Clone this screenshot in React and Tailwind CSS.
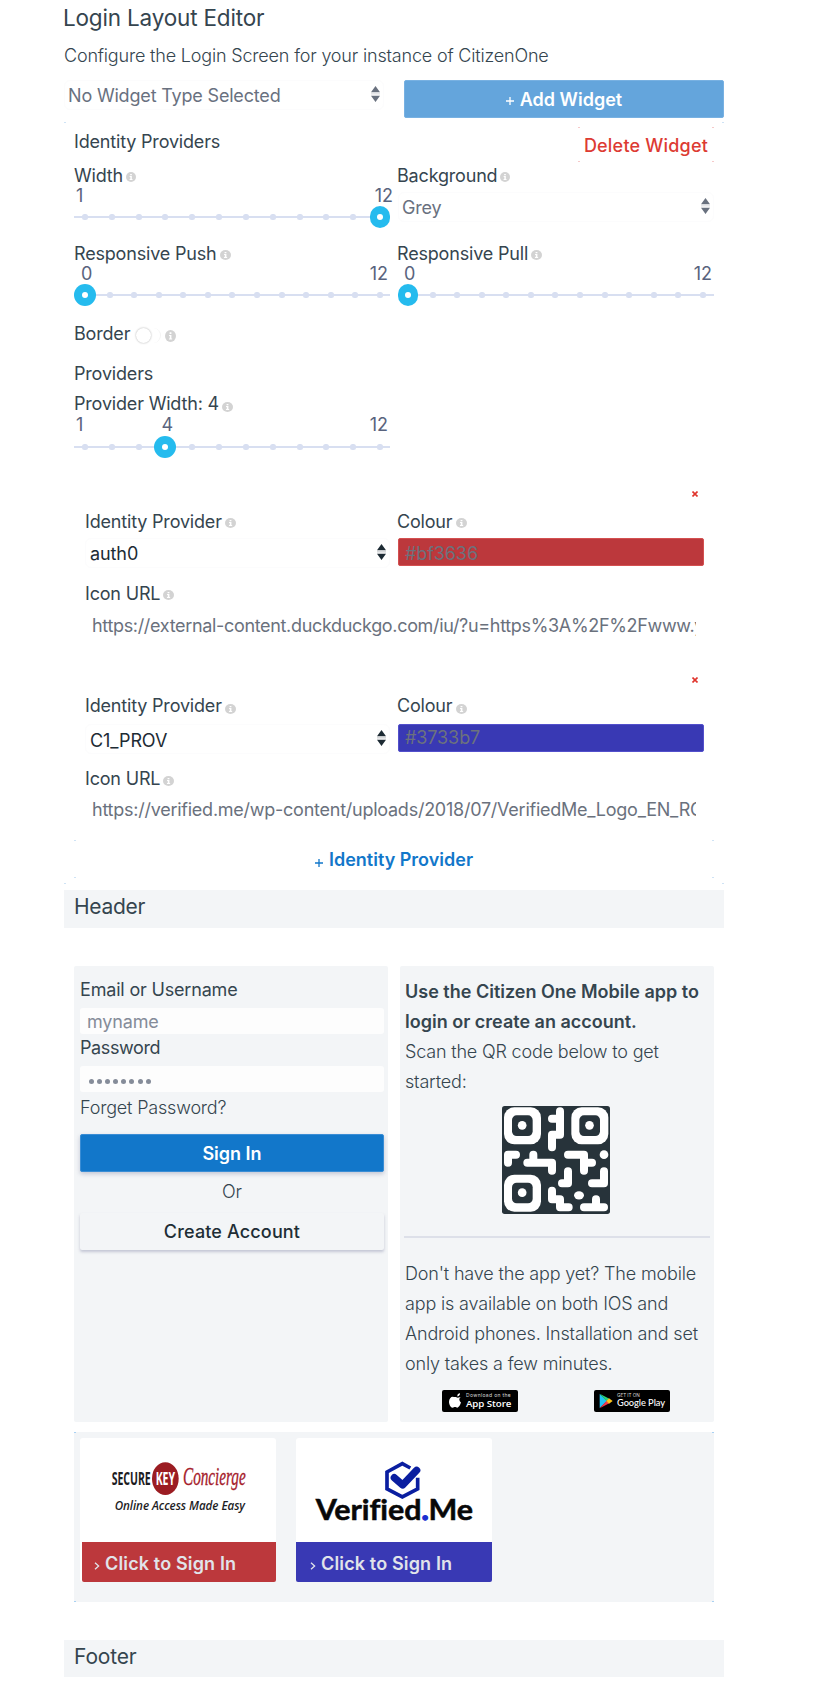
import React from "react";

function Corners({ color }) {
  return (
    <svg className={"pointer-events-none absolute inset-0 h-full w-full " + color} fill="currentColor">
      <rect x="0" y="0" width="2" height="1" />
      <rect x="0" y="100%" width="2" height="1" transform="translate(0 -1)" />
      <rect x="100%" y="0" width="2" height="1" transform="translate(-2 0)" />
      <rect x="100%" y="100%" width="2" height="1" transform="translate(-2 -1)" />
    </svg>
  );
}

function Info({ className = "" }) {
  return (
    <svg viewBox="0 0 12 12" preserveAspectRatio="none" className={"shrink-0 " + className}>
      <circle cx="6" cy="6" r="6" fill="#d3d3d3" />
      <path d="M5 2.3h2v1.6H5zM4.4 4.9H7v3.5h.8v1.2H4.3V8.4h.9V6h-.8z" fill="#fff" />
    </svg>
  );
}

function Label({ children, className = "", info = "mt-[5px] h-[11px] w-[11px]" }) {
  return (
    <div className={"flex h-5 whitespace-nowrap text-[18px] leading-5 text-[#35454f] " + className}>
      <span>{children}</span>
      <Info className={info} />
    </div>
  );
}

function Arrows({ className = "" }) {
  return (
    <svg viewBox="0 0 9 16" className={"h-4 w-[9px] shrink-0 " + className} fill="currentColor">
      <path d="M4.5 0L9 6.3H0zM4.5 16L9 9.7H0z" />
      <path d="M0 7.5h9v.8H0z" opacity=".35" />
    </svg>
  );
}

function Select({ value, className, textClass = "", arrowClass = "mt-[6px]" }) {
  return (
    <div className={"flex h-[30px] justify-between rounded-[6px] border border-[#fcfcfd] pl-[3px] pr-[3px] text-[18px] " + className}>
      <span className={textClass}>{value}</span>
      <Arrows className={arrowClass} />
    </div>
  );
}

function Slider({ steps, value, marks, wide = "w-[22px]", track = "pl-[8px] pr-[7px]" }) {
  return (
    <div className="w-[316px]">
      <div className="flex h-5 justify-between px-[2px] text-[18px] leading-5 tracking-normal text-[#59637d]">{marks}</div>
      <div className={"relative flex h-[22px] items-center justify-between " + track}>
        <div className="absolute inset-x-0 top-[10px] h-[2px] bg-[#d8dff1]" />
        {Array.from({ length: steps }, (_, i) => (
          <div key={i} className="relative flex h-[6px] w-[6px] items-center justify-center rounded-[2.5px] bg-[#d8dff1]">
            {i === value && (
              <div className={"flex h-[22px] shrink-0 items-center justify-center rounded-full bg-[#25bbee] " + wide}>
                <div className="h-[6px] w-[6px] rounded-[3px] bg-white" />
              </div>
            )}
          </div>
        ))}
      </div>
    </div>
  );
}

function Provider({ name, colour, colourBox, url, urlClass, second }) {
  const info = second ? "mt-[8px] h-[10px] w-[11px]" : "mt-[6px] h-[10px] w-[11px]";
  return (
    <div className="pl-[11px]">
      <div className="flex h-[6px] justify-end pr-[16px]">
        <svg viewBox="0 0 6 6" className="h-[6px] w-[6px]" stroke="#e0342c" strokeWidth="1.6"><path d="M.5 .5l5 5M5.500 .5l-5 5" /></svg>
      </div>
      <div className={"flex " + (second ? "mt-[13px]" : "mt-[15px]")}>
        <Label className="w-[312px]" info={info + " ml-[3px]"}>Identity Provider</Label>
        <Label info={info + " ml-[4px]"}>Colour</Label>
      </div>
      <div className={"flex " + (second ? "mt-[8px]" : "mt-[6px]")}>
        <Select
          value={name}
          className="w-[305px] tracking-[-0.1px] text-[#1d2b34]"
          textClass={second ? "ml-px mt-[6px] leading-5" : "ml-px mt-[5px] leading-5"}
          arrowClass="mt-[5px]"
        />
        <div className={"ml-[8px] h-[28px] w-[306px] rounded-[2px] border pl-[6px] text-[18px] tracking-[-0.1px] text-[#6c727d] " + colourBox}>
          {colour}
        </div>
      </div>
      <Label className={second ? "mt-[15px]" : "mt-[16px]"} info={(second ? "mt-[7px]" : "mt-[6px]") + " ml-[3px] h-[10px] w-[11px]"}>Icon URL</Label>
      <div className={"h-[28px] w-[618px] pl-[7px] pr-[7px] " + (second ? "mt-[7px]" : "mt-[8px]")}>
        <div className={"overflow-hidden whitespace-nowrap text-[18px] leading-[28px] text-[#6a717d] " + urlClass}>{url}</div>
      </div>
    </div>
  );
}

function QrCode() {
  return (
    <svg viewBox="0 0 324 324" className="h-[108px] w-[108px]">
      <rect width="324" height="324" rx="8" fill="#27333a" />
      {[[6, 4], [208, 4], [6, 206]].map(([x, y]) => (
        <g key={x + "-" + y} transform={`translate(${x} ${y})`}>
          <rect width="111" height="111" rx="31" fill="#fff" />
          <rect x="24" y="24" width="62" height="62" rx="14" fill="#27333a" />
          <circle cx="54.500" cy="54" r="13" fill="#fff" />
        </g>
      ))}
      <g fill="none" stroke="#fff" strokeWidth="24" strokeLinecap="round" strokeLinejoin="round">
        <path d="M174 16V86H150V124M150 38H174" />
        <path d="M42 146H18V170M94 146V170M76 170H150V194" />
        <path d="M198 146H246V194M246 170H270" />
        <path d="M198 196V232H180M306 196V232H270" />
        <path d="M150 254V280H174V304H200M246 304H306M282 280V304" />
      </g>
      <circle cx="306" cy="146" r="13" fill="#fff" />
      <ellipse cx="231" cy="268" rx="15" ry="12.500" fill="#fff" />
    </svg>
  );
}

function AppStore() {
  return (
    <svg viewBox="0 0 228 66" className="h-[22px] w-[76px]">
      <rect width="228" height="66" rx="6" fill="#000" />
      <path d="M46 19c-1-5 4-9 8-9 1 5-4 10-8 9zM39 21c4 0 5 2 8 2s5-2 9-1c-4 3-5 6-3 10 1 3 3 4 4 5-2 8-7 16-11 16-3 0-4-2-7-2s-4 2-7 2c-6 0-11-10-11-18 0-9 6-15 11-15 3 0 5 1 7 1z" fill="#fff" />
      <text x="72" y="22" fontSize="15" fill="#ddd" fontFamily="Inter, sans-serif" textLength="134">Download on the</text>
      <text x="72" y="50" fontSize="26" fontWeight="600" fill="#fff" fontFamily="Open Sans, sans-serif" textLength="136" lengthAdjust="spacingAndGlyphs">App Store</text>
    </svg>
  );
}

function GooglePlay() {
  return (
    <svg viewBox="0 0 228 66" className="h-[22px] w-[76px]">
      <rect width="228" height="66" rx="6" fill="#000" />
      <path d="M17 12v42l22-21z" fill="#20c4f4" />
      <path d="M17 11l29 15-8 8z" fill="#27d07a" />
      <path d="M17 55l29-15-8-8z" fill="#f0394b" />
      <path d="M45 25l11 8-11 8-8-8z" fill="#fcc419" />
      <text x="69" y="21" fontSize="14" fill="#ddd" fontFamily="Inter, sans-serif" textLength="68" lengthAdjust="spacingAndGlyphs">GET IT ON</text>
      <text x="69" y="48" fontSize="26" fontWeight="500" fill="#fff" fontFamily="Lato, sans-serif" textLength="144" lengthAdjust="spacingAndGlyphs">Google Play</text>
    </svg>
  );
}

function SecureKeyLogo() {
  return (
    <svg viewBox="0 0 588 312" className="h-[104px] w-[196px]">
      <text x="95" y="141" fontSize="55" fontWeight="700" fill="#1d1d1f" fontFamily="Open Sans, sans-serif" textLength="117" lengthAdjust="spacingAndGlyphs">SECURE</text>
      <ellipse cx="256" cy="122" rx="40" ry="49" fill="#9b1c22" />
      <text x="227" y="141" fontSize="55" fontWeight="700" fill="#fff" fontFamily="Open Sans, sans-serif" textLength="58" lengthAdjust="spacingAndGlyphs">KEY</text>
      <text x="309" y="142" fontSize="73" fontStyle="italic" fill="#a5202b" stroke="#a5202b" strokeWidth="1" fontFamily="Liberation Serif, serif" textLength="188" lengthAdjust="spacingAndGlyphs">Concierge</text>
      <text x="104" y="216" fontSize="37" fontStyle="italic" fontWeight="600" fill="#1d1d1f" fontFamily="Open Sans, sans-serif" textLength="391" lengthAdjust="spacingAndGlyphs">Online Access Made Easy</text>
    </svg>
  );
}

function VerifiedLogo() {
  return (
    <svg viewBox="0 0 588 312" className="h-[104px] w-[196px]">
      <path d="M343 90L319 77 273 102V153L319 177 365 153V119" fill="none" stroke="#0a1ea0" strokeWidth="11" />
      <path d="M295 119L320 141 362 97" fill="none" stroke="#0a1ea0" strokeWidth="22" strokeLinecap="round" strokeLinejoin="round" />
      <text x="59" y="246" fontSize="86" fontWeight="700" fill="#080808" stroke="#080808" strokeWidth="1.5" fontFamily="Lato, sans-serif" textLength="472" lengthAdjust="spacingAndGlyphs" className="[font-variant-ligatures:none]">
        Verified<tspan fill="#1a2fd0" stroke="#1a2fd0" strokeWidth="4">.</tspan>Me
      </text>
    </svg>
  );
}

function SignInCard({ logo, bandClass, arrowClass }) {
  return (
    <div className="h-[144px] w-[196px] rounded-[3px] bg-white">
      <div className="h-[104px]">{logo}</div>
      <div className={"flex h-[40px] rounded-b-[2px] text-[18px] font-semibold leading-[44px] text-[#e1e4ea] " + bandClass}>
        <svg viewBox="0 0 6 8" className={"mt-[20px] h-[8px] w-[6px] " + arrowClass} fill="none" stroke="currentColor" strokeWidth="1.3"><path d="M1 .8L4.600 4 1 7.200" /></svg>
        <span className="tracking-[0.15px]">Click to Sign In</span>
      </div>
    </div>
  );
}

function Plus({ className }) {
  return (
    <svg viewBox="0 0 8 8" className={"h-[8px] w-[8px] " + className} stroke="currentColor" strokeWidth="1.3"><path d="M4 0v8M0 4h8" /></svg>
  );
}

export default function App() {
  return (
    <div className="min-h-[1684px] w-[830px] bg-white pl-[64px] font-['Inter',sans-serif] text-[18px] tracking-[-0.18px] text-[#35454f]">
      <div className="w-[660px]">
        <h1 className="-ml-px pt-[4px] text-[22.500px] leading-[28px]">Login Layout Editor</h1>
        <p className="mt-[14px] h-5 whitespace-nowrap font-light leading-5">Configure the Login Screen for your instance of CitizenOne</p>

        <div className="mt-[14px] flex h-[38px] justify-between">
          <Select value="No Widget Type Selected" className="w-[320px] text-[#69717f]" textClass="mt-[5px] leading-5 whitespace-nowrap" arrowClass="mt-[5px]" />
          <button className="flex h-[38px] w-[320px] items-center justify-center rounded-[2px] border border-[#78b1e2] bg-[#64a5dc] font-semibold tracking-normal text-white">
            <Plus className="mr-[6px] mt-[4px]" />Add Widget
          </button>
        </div>

        <section className="relative mt-[4px] h-[762px] px-[10px]">
          <Corners color="text-[#cfe3f5]" />
          <div className="flex h-[44px] justify-between pt-[5px]">
            <span className="mt-[5px] leading-5">Identity Providers</span>
            <button className="relative h-[35px] w-[136px] font-medium leading-[38px] tracking-[0.2px] text-[#dd3b33]"><Corners color="text-[#f6c9c9]" />Delete Widget</button>
          </div>

          <div className="flex gap-[8px]">
            <div className="w-[316px]">
              <Label info="mt-[6px] ml-[3px] h-[10px] w-[10px]">Width</Label>
              <Slider steps={12} value={11} wide="w-[20px]" marks={<><span>1</span><span className="-mr-[5px]">12</span></>} />
            </div>
            <div className="w-[316px]">
              <Label className="-ml-px" info="mt-[6px] ml-[3px] h-[10px] w-[10px]">Background</Label>
              <Select value="Grey" className="mt-[6px] w-[316px] text-[#69717f]" textClass="mt-[5px] leading-5" arrowClass="mt-[5px]" />
            </div>
          </div>

          <div className="mt-[16px] flex gap-[8px]">
            <div className="w-[316px]">
              <Label info="mt-[6px] ml-[3px] h-[10px] w-[11px]">Responsive Push</Label>
              <Slider steps={13} value={0} marks={<><span className="ml-[5px]">0</span><span>12</span></>} />
            </div>
            <div className="w-[316px]">
              <Label className="-ml-px" info="mt-[6px] ml-[3px] h-[10px] w-[11px]">Responsive Pull</Label>
              <Slider steps={13} value={0} wide="w-[20px]" track="pl-[7px] pr-[8px]" marks={<><span className="ml-[4px]">0</span><span>12</span></>} />
            </div>
          </div>

          <div className="mt-[18px] flex h-5 leading-5">
            <span>Border</span>
            <div className="ml-[6px] mt-[4px] h-[15px] w-[25px] rounded-full border-r border-[#f4f4f4]">
              <div className="h-[15px] w-[15px] rounded-full bg-white shadow-[0_0_2px_rgba(0,0,0,0.35)]" />
            </div>
            <Info className="ml-[4px] mt-[6px] h-[12px] w-[11px]" />
          </div>
          <div className="mt-[20px] h-5 leading-5">Providers</div>
          <Label className="mt-[10px] mb-px" info="mt-[8px] ml-[3px] h-[10px] w-[11px]">Provider Width: 4</Label>
          <Slider steps={12} value={3} track="mt-px pl-[8px] pr-[7px]" marks={<><span className="w-5">1</span><span className="-ml-[131px]">4</span><span>12</span></>} />

          <div className="mt-[33px]">
            <Provider name="auth0" colour="#bf3636" colourBox="border-[#d45050] bg-[#bc383c] leading-[29px]" url="https://external-content.duckduckgo.com/iu/?u=https%3A%2F%2Fwww.youtube.com" urlClass="tracking-[-0.33px]" />
          </div>
          <div className="mt-[37px]">
            <Provider second name="C1_PROV" colour="#3733b7" colourBox="border-[#5350cc] bg-[#3939b4] leading-[26px]" url="https://verified.me/wp-content/uploads/2018/07/VerifiedMe_Logo_EN_RGB.png" urlClass="tracking-[-0.25px]" />
          </div>
          <button className="relative mt-[16px] flex h-[38px] w-full items-center justify-center font-semibold tracking-normal text-[#1277ca]">
            <Corners color="text-[#cfe3f5]" />
            <Plus className="mr-[6px] mt-[7px]" />Identity Provider
          </button>
        </section>

        <div className="mt-[6px] h-[38px] bg-[#f3f5f7] pl-[10px] text-[21px] leading-[33px] tracking-[-0.3px]">Header</div>

        <div className="mt-[38px] flex justify-between px-[10px]">
          <div className="h-[456px] w-[314px] rounded-[2px] bg-[#f3f5f7] pl-[6px] pr-[4px] pt-[14px]">
            <div className="h-5 leading-5">Email or Username</div>
            <div className="mt-[8px] h-[26px] rounded-[3px] bg-[#fdfdfd] pl-[7px] leading-[27px] text-[#858c99]">myname</div>
            <div className="mt-[4px] h-5 leading-5 tracking-[-0.4px]">Password</div>
            <div className="mt-[8px] flex h-[26px] items-center gap-[3.100px] rounded-[3px] bg-[#fdfdfd] pl-[9px] pt-[4px]">
              {Array.from({ length: 8 }, (_, i) => <i key={i} className="h-[5px] w-[5px] rounded-full bg-[#858c99]" />)}
            </div>
            <div className="mt-[6px] h-5 font-light leading-5">Forget Password?</div>
            <button className="mt-[16px] block h-[38px] w-full rounded-[2px] border border-[#3a8dd5] bg-[#1277ca] font-semibold leading-[38px] tracking-normal text-white shadow-[0_2px_4px_rgba(50,60,110,0.25)]">Sign In</button>
            <div className="mt-[10px] h-5 text-center font-light leading-5">Or</div>
            <button className="mt-[11px] block h-[37px] w-full rounded-[2px] font-medium leading-[38px] tracking-[0.15px] text-[#202d35] shadow-[0_2px_3px_rgba(50,60,110,0.25)]">Create Account</button>
          </div>

          <div className="h-[456px] w-[314px] rounded-[2px] bg-[#f3f5f7] pl-[4px] pr-[4px] pt-[11px]">
            <div className="whitespace-nowrap pl-px leading-[30px]">
              <p className="font-semibold tracking-normal">Use the Citizen One Mobile app to<br />login or create an account.</p>
              <p className="font-light">Scan the QR code below to get<br />started:</p>
            </div>
            <div className="mt-[9px] pl-[98px]"><QrCode /></div>
            <div className="mt-[22px] h-[2px] bg-[#dde0e9]" />
            <p className="mt-[21px] whitespace-nowrap pl-px font-light leading-[30px] tracking-[-0.16px]">Don't have the app yet? The mobile<br />app is available on both IOS and<br />Android phones. Installation and set<br />only takes a few minutes.</p>
            <div className="mt-[11px] flex gap-[76px] pl-[38px]"><AppStore /><GooglePlay /></div>
          </div>
        </div>

        <div className="relative mx-[10px] mt-[10px] flex h-[170px] gap-[20px] bg-[#f3f5f7] pl-[6px] pt-[6px]">
          <Corners color="text-[#a9d1f2]" />
          <SignInCard logo={<SecureKeyLogo />} bandClass="ml-[2px] bg-[#bc383c]" arrowClass="ml-[12px] mr-[5px]" />
          <SignInCard logo={<VerifiedLogo />} bandClass="bg-[#3939b4]" arrowClass="ml-[14px] mr-[5px]" />
        </div>

        <div className="mt-[38px] h-[37px] bg-[#f3f5f7] pl-[10px] text-[21px] leading-[33px]">Footer</div>
      </div>
    </div>
  );
}
